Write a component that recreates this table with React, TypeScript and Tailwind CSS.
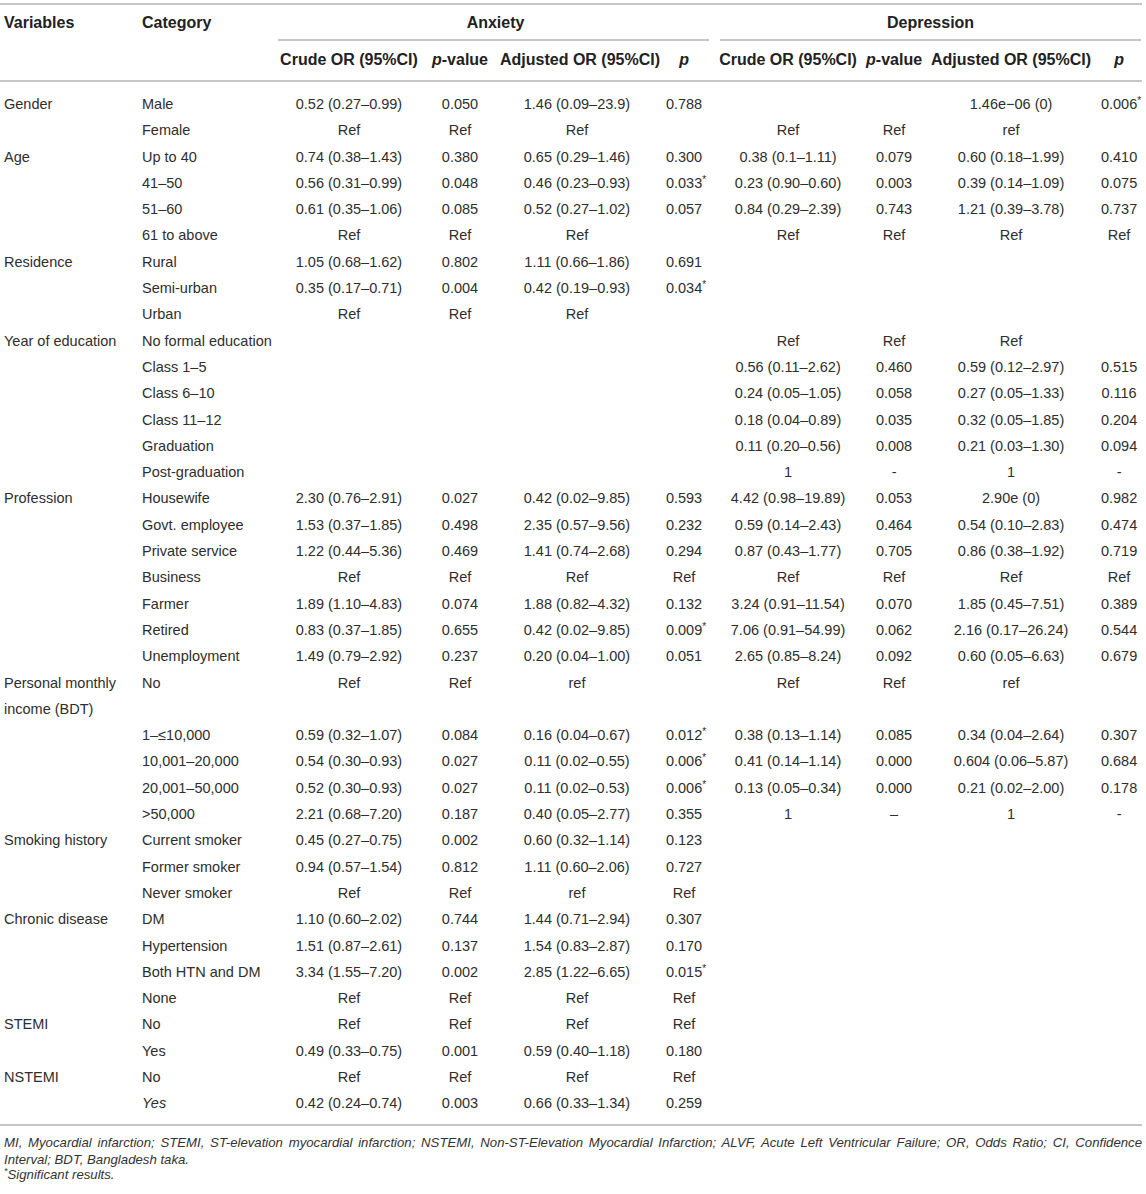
import React from 'react';

type Group = { name: string; italicCat?: string; rows: string[][] };

// [category, anxCrude, anxP, anxAdj, anxAdjP, depCrude, depP, depAdj, depAdjP]
const groups: Group[] = [
  {
    name: 'Gender',
    rows: [
      ['Male', '0.52 (0.27–0.99)', '0.050', '1.46 (0.09–23.9)', '0.788', '', '', '1.46e−06 (0)', '0.006*'],
      ['Female', 'Ref', 'Ref', 'Ref', '', 'Ref', 'Ref', 'ref', ''],
    ],
  },
  {
    name: 'Age',
    rows: [
      ['Up to 40', '0.74 (0.38–1.43)', '0.380', '0.65 (0.29–1.46)', '0.300', '0.38 (0.1–1.11)', '0.079', '0.60 (0.18–1.99)', '0.410'],
      ['41–50', '0.56 (0.31–0.99)', '0.048', '0.46 (0.23–0.93)', '0.033*', '0.23 (0.90–0.60)', '0.003', '0.39 (0.14–1.09)', '0.075'],
      ['51–60', '0.61 (0.35–1.06)', '0.085', '0.52 (0.27–1.02)', '0.057', '0.84 (0.29–2.39)', '0.743', '1.21 (0.39–3.78)', '0.737'],
      ['61 to above', 'Ref', 'Ref', 'Ref', '', 'Ref', 'Ref', 'Ref', 'Ref'],
    ],
  },
  {
    name: 'Residence',
    rows: [
      ['Rural', '1.05 (0.68–1.62)', '0.802', '1.11 (0.66–1.86)', '0.691', '', '', '', ''],
      ['Semi-urban', '0.35 (0.17–0.71)', '0.004', '0.42 (0.19–0.93)', '0.034*', '', '', '', ''],
      ['Urban', 'Ref', 'Ref', 'Ref', '', '', '', '', ''],
    ],
  },
  {
    name: 'Year of education',
    rows: [
      ['No formal education', '', '', '', '', 'Ref', 'Ref', 'Ref', ''],
      ['Class 1–5', '', '', '', '', '0.56 (0.11–2.62)', '0.460', '0.59 (0.12–2.97)', '0.515'],
      ['Class 6–10', '', '', '', '', '0.24 (0.05–1.05)', '0.058', '0.27 (0.05–1.33)', '0.116'],
      ['Class 11–12', '', '', '', '', '0.18 (0.04–0.89)', '0.035', '0.32 (0.05–1.85)', '0.204'],
      ['Graduation', '', '', '', '', '0.11 (0.20–0.56)', '0.008', '0.21 (0.03–1.30)', '0.094'],
      ['Post-graduation', '', '', '', '', '1', '-', '1', '-'],
    ],
  },
  {
    name: 'Profession',
    rows: [
      ['Housewife', '2.30 (0.76–2.91)', '0.027', '0.42 (0.02–9.85)', '0.593', '4.42 (0.98–19.89)', '0.053', '2.90e (0)', '0.982'],
      ['Govt. employee', '1.53 (0.37–1.85)', '0.498', '2.35 (0.57–9.56)', '0.232', '0.59 (0.14–2.43)', '0.464', '0.54 (0.10–2.83)', '0.474'],
      ['Private service', '1.22 (0.44–5.36)', '0.469', '1.41 (0.74–2.68)', '0.294', '0.87 (0.43–1.77)', '0.705', '0.86 (0.38–1.92)', '0.719'],
      ['Business', 'Ref', 'Ref', 'Ref', 'Ref', 'Ref', 'Ref', 'Ref', 'Ref'],
      ['Farmer', '1.89 (1.10–4.83)', '0.074', '1.88 (0.82–4.32)', '0.132', '3.24 (0.91–11.54)', '0.070', '1.85 (0.45–7.51)', '0.389'],
      ['Retired', '0.83 (0.37–1.85)', '0.655', '0.42 (0.02–9.85)', '0.009*', '7.06 (0.91–54.99)', '0.062', '2.16 (0.17–26.24)', '0.544'],
      ['Unemployment', '1.49 (0.79–2.92)', '0.237', '0.20 (0.04–1.00)', '0.051', '2.65 (0.85–8.24)', '0.092', '0.60 (0.05–6.63)', '0.679'],
    ],
  },
  {
    name: 'Personal monthly income (BDT)',
    rows: [
      ['No', 'Ref', 'Ref', 'ref', '', 'Ref', 'Ref', 'ref', ''],
      ['1–≤10,000', '0.59 (0.32–1.07)', '0.084', '0.16 (0.04–0.67)', '0.012*', '0.38 (0.13–1.14)', '0.085', '0.34 (0.04–2.64)', '0.307'],
      ['10,001–20,000', '0.54 (0.30–0.93)', '0.027', '0.11 (0.02–0.55)', '0.006*', '0.41 (0.14–1.14)', '0.000', '0.604 (0.06–5.87)', '0.684'],
      ['20,001–50,000', '0.52 (0.30–0.93)', '0.027', '0.11 (0.02–0.53)', '0.006*', '0.13 (0.05–0.34)', '0.000', '0.21 (0.02–2.00)', '0.178'],
      ['>50,000', '2.21 (0.68–7.20)', '0.187', '0.40 (0.05–2.77)', '0.355', '1', '–', '1', '-'],
    ],
  },
  {
    name: 'Smoking history',
    rows: [
      ['Current smoker', '0.45 (0.27–0.75)', '0.002', '0.60 (0.32–1.14)', '0.123', '', '', '', ''],
      ['Former smoker', '0.94 (0.57–1.54)', '0.812', '1.11 (0.60–2.06)', '0.727', '', '', '', ''],
      ['Never smoker', 'Ref', 'Ref', 'ref', 'Ref', '', '', '', ''],
    ],
  },
  {
    name: 'Chronic disease',
    rows: [
      ['DM', '1.10 (0.60–2.02)', '0.744', '1.44 (0.71–2.94)', '0.307', '', '', '', ''],
      ['Hypertension', '1.51 (0.87–2.61)', '0.137', '1.54 (0.83–2.87)', '0.170', '', '', '', ''],
      ['Both HTN and DM', '3.34 (1.55–7.20)', '0.002', '2.85 (1.22–6.65)', '0.015*', '', '', '', ''],
      ['None', 'Ref', 'Ref', 'Ref', 'Ref', '', '', '', ''],
    ],
  },
  {
    name: 'STEMI',
    rows: [
      ['No', 'Ref', 'Ref', 'Ref', 'Ref', '', '', '', ''],
      ['Yes', '0.49 (0.33–0.75)', '0.001', '0.59 (0.40–1.18)', '0.180', '', '', '', ''],
    ],
  },
  {
    name: 'NSTEMI',
    italicCat: 'Yes',
    rows: [
      ['No', 'Ref', 'Ref', 'Ref', 'Ref', '', '', '', ''],
      ['Yes', '0.42 (0.24–0.74)', '0.003', '0.66 (0.33–1.34)', '0.259', '', '', '', ''],
    ],
  },
];

const colWidths = ['w-[136px]', 'w-[142px]', 'w-[142px]', 'w-[80px]', 'w-[154px]', 'w-[60px]', 'w-[148px]', 'w-[64px]', 'w-[170px]', 'w-[46px]'];

// value with a trailing "*" gets a superscript star
const Value = ({ v }: { v: string }) => {
  if (v.endsWith('*')) {
    return (
      <>
        {v.slice(0, -1)}
        <sup className="text-[10px] -mr-[4px]">*</sup>
      </>
    );
  }
  return <>{v}</>;
};

const line = 'border-[#c6c6c6]';

export default function App() {
  return (
    <div className="bg-white w-[1146px] min-h-[1194px] pt-[3px] text-[#2e2e2e] font-['Liberation_Sans',Arial,sans-serif]">
      <table className={`table-fixed border-collapse w-[1142px] border-t-2 border-b-2 ${line}`}>
        <colgroup>
          {colWidths.map((w, i) => (
            <col key={i} className={w} />
          ))}
        </colgroup>
        <thead className="text-[16px] font-bold text-[#222]">
          <tr>
            <th rowSpan={2} className={`p-0 pl-[4px] pt-[8px] text-left align-top leading-[20px] border-b-2 ${line}`}>
              Variables
            </th>
            <th rowSpan={2} className={`p-0 pl-[6px] pt-[8px] text-left align-top leading-[20px] border-b-2 ${line}`}>
              Category
            </th>
            <th colSpan={4} className="p-0 pt-[8px] pr-[5px] align-top">
              <div className={`leading-[20px] pb-[6px] pl-[4px] border-b-2 ${line}`}>Anxiety</div>
            </th>
            <th colSpan={4} className="p-0 pt-[8px] pl-[6px] pr-[1px] align-top">
              <div className={`leading-[20px] pb-[6px] border-b-2 ${line}`}>Depression</div>
            </th>
          </tr>
          <tr className={`border-b-2 ${line}`}>
            {[0, 1].map((k) => (
              <React.Fragment key={k}>
                <th className="p-0 pt-[9px] pb-[10px] leading-[20px] whitespace-nowrap">Crude OR (95%CI)</th>
                <th className="p-0 pt-[9px] pb-[10px] leading-[20px] whitespace-nowrap">
                  <i>p</i>-value
                </th>
                <th className="p-0 pt-[9px] pb-[10px] leading-[20px] whitespace-nowrap">Adjusted OR (95%CI)</th>
                <th className="p-0 pt-[9px] pb-[10px] leading-[20px] whitespace-nowrap">
                  <i>p</i>
                </th>
              </React.Fragment>
            ))}
          </tr>
        </thead>
        <tbody className="text-[14.5px] leading-[26.3px]">
          <tr>
            <td colSpan={10} className="p-0 h-[10px]" />
          </tr>
          {groups.map((g) =>
            g.rows.map((r, i) => (
              <tr key={g.name + i}>
                <td className="p-0 pl-[4px] pr-[4px] align-top">{i === 0 ? g.name : ''}</td>
                <td className={`p-0 pl-[6px] align-top whitespace-nowrap ${g.italicCat === r[0] ? 'italic' : ''}`}>{r[0]}</td>
                {r.slice(1).map((v, j) => (
                  <td key={j} className="p-0 text-center align-top whitespace-nowrap">
                    <Value v={v} />
                  </td>
                ))}
              </tr>
            ))
          )}
          <tr>
            <td colSpan={10} className="p-0 h-[8px]" />
          </tr>
        </tbody>
      </table>

      {/* Footnotes */}
      <div className="w-[1142px] pl-[4px] pt-[8px] text-[13.2px] italic leading-[17px] text-[#333]">
        <p className="text-justify [text-align-last:justify]">
          MI, Myocardial infarction; STEMI, ST-elevation myocardial infarction; NSTEMI, Non-ST-Elevation Myocardial Infarction; ALVF, Acute Left Ventricular Failure; OR, Odds Ratio; CI, Confidence
        </p>
        <p>Interval; BDT, Bangladesh taka.</p>
        <p className="-mt-[2px]">
          <sup className="text-[9px]">*</sup>Significant results.
        </p>
      </div>
    </div>
  );
}
